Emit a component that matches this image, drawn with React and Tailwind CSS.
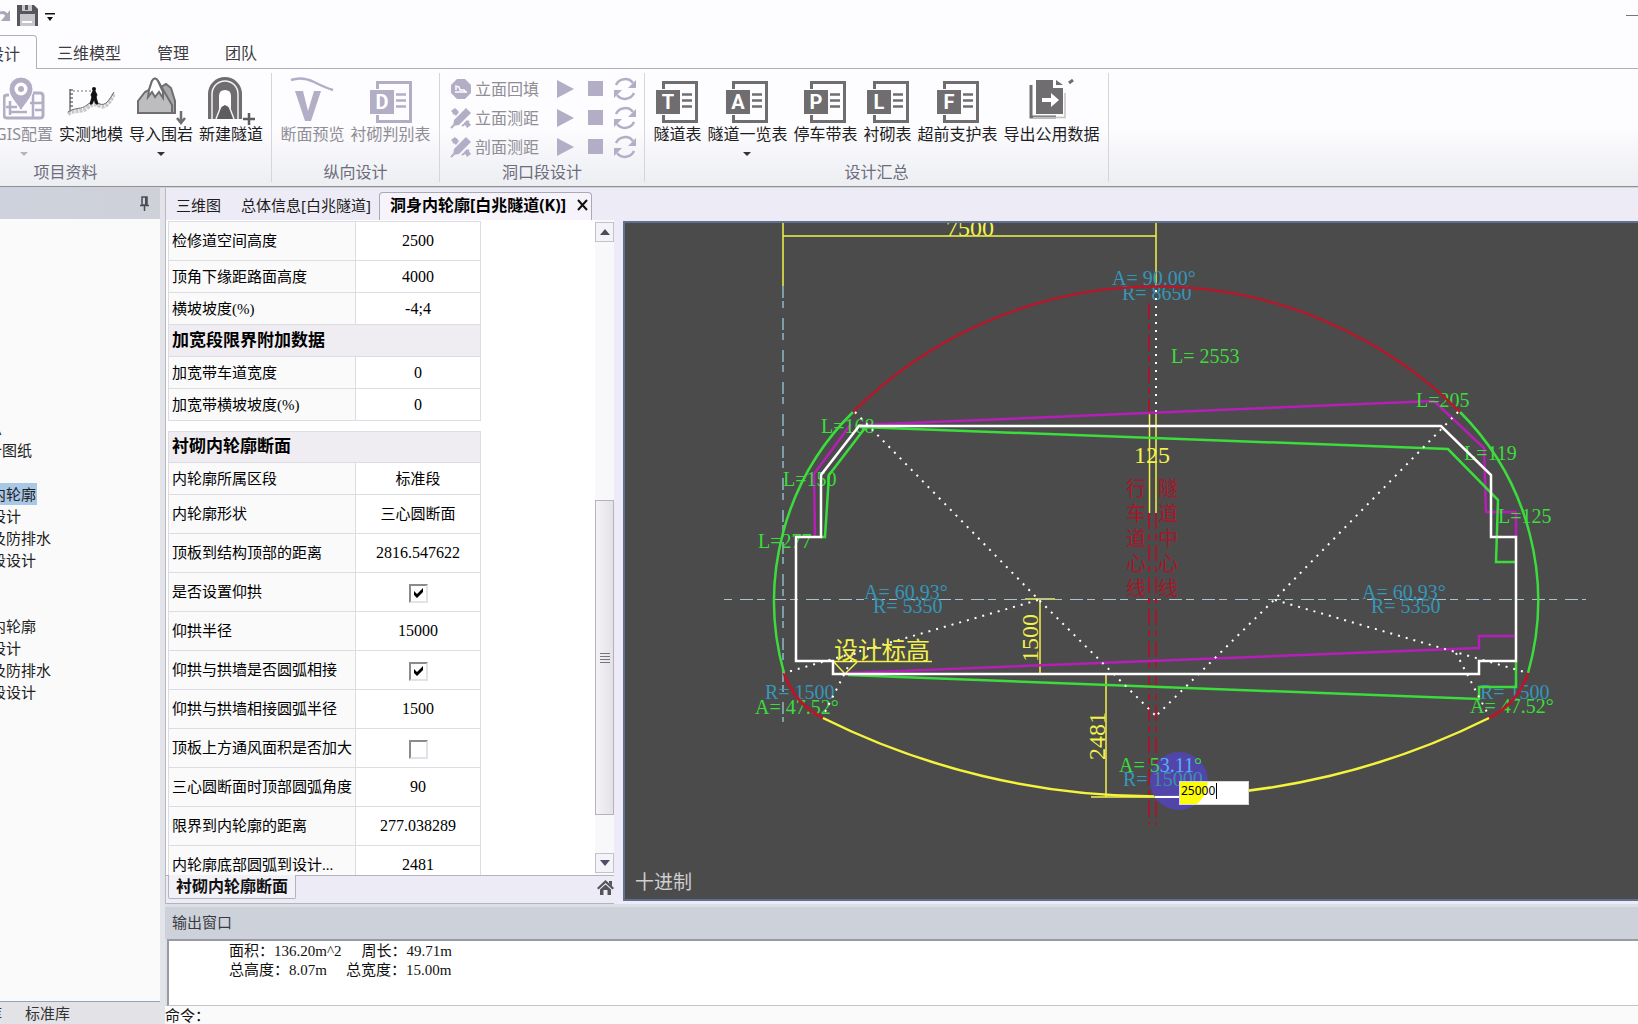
import React from "react";

const GRAY = "#6f6d70";
const DIM = "#b3aec5";

function SheetIcon({ letter, color = GRAY }) {
  return (
    <svg width="42" height="42" viewBox="0 0 42 42" aria-hidden="true">
      <path d="M7.5 8V1.5H40.5V40.5H7.5V34" fill="none" stroke={color} strokeWidth="3" />
      <rect x="0" y="9" width="24" height="24" fill={color} />
      <path d="M26 13.5H36M26 19.5H36M26 25.5H36" stroke={color} strokeWidth="2.5" />
      <text x="12" y="28" textAnchor="middle" fontSize="20" fill="#fff" className="font-['Roboto'] font-bold">
        {letter}
      </text>
    </svg>
  );
}

function GisIcon() {
  return (
    <svg width="42" height="44" viewBox="0 0 42 44" fill="none" stroke={DIM} aria-hidden="true">
      <path d="M6 18H4q-3 0-3 3V38q0 3 3 3H37q3 0 3-3V19q0-3-3-3H30" strokeWidth="3" />
      <path d="M3 30H14M27 26H39M30 17V40M6 35H24M32 33H39M7 24V38" strokeWidth="2.5" />
      <path d="M18 34C14 26 6 20 6 12a12 12 0 0 1 24 0C30 20 22 26 18 34Z" fill={DIM} stroke="#fff" strokeWidth="1" />
      <circle cx="18" cy="12" r="6.5" fill="#fff" stroke="none" />
      <circle cx="18" cy="12" r="3" fill={DIM} stroke="none" />
    </svg>
  );
}

function TerrainIcon() {
  return (
    <svg width="48" height="44" viewBox="0 0 48 44" fill="none" aria-hidden="true">
      <path d="M3 12V35M3 13H6M3 17H6M3 21H6M3 25H6M3 29H6" stroke="#333" strokeWidth="1" />
      <path d="M6 14H24" stroke="#777" strokeWidth="1" strokeDasharray="2 2" />
      <path d="M1 37C8 32 14 36 20 31S28 27 33 29S42 27 47 17" stroke="#c8c8c8" strokeWidth="4" strokeDasharray="3 1" />
      <path d="M1 35C8 30 14 33 20 28S28 25 33 27S42 24 47 15" stroke="#6b6b6b" strokeWidth="1" />
      <circle cx="27" cy="12" r="2" fill="#111" />
      <path d="M27 12L24 18L25 20L23 27H25L27 22L29 27H31L29 20L30 18Z" fill="#111" stroke="#111" />
    </svg>
  );
}

function RockIcon() {
  return (
    <svg width="50" height="48" viewBox="0 0 50 48" fill="none" stroke={GRAY} aria-hidden="true">
      <path d="M25 10L30 7L35 11L39 24V36H25Z" fill="#a9a8ab" strokeWidth="2" />
      <path d="M2 36V24L9 15L13 13L16 4Q19-1 22 4L29 16L36 28V36Z" fill="#bdbdbf" strokeWidth="2" />
      <path d="M13 13L16 4Q19-1 22 4L27 15V21L23 15L19 20L16 15L12 20Z" fill="#fff" strokeWidth="2" />
      <path d="M45 34V44M41 41L45 46L49 41" strokeWidth="2.5" />
    </svg>
  );
}

function TunnelIcon() {
  return (
    <svg width="48" height="48" viewBox="0 0 48 48" fill="none" aria-hidden="true">
      <path d="M1 42V17a17 17 0 0 1 34 0V42Z" fill={GRAY} />
      <path d="M5 42V17a13 13 0 0 1 26 0V42" stroke="#f4f4f6" strokeWidth="1.5" />
      <path d="M12 40V19q0-6 6-6t6 6V40Z" fill="#fff" />
      <path d="M9 42q2-12 9-14q7 2 9 14Z" fill="#5d5c60" />
      <path d="M9 42L14 29M27 42L22 29" stroke="#f4f4f6" strokeWidth="1.5" />
      <path d="M36 42H48M42 36V48" stroke="#5d5c60" strokeWidth="2.5" />
    </svg>
  );
}

function ProfileIcon() {
  return (
    <svg width="44" height="46" viewBox="0 0 44 46" fill="none" stroke={DIM} aria-hidden="true">
      <path d="M1 3Q12-1 24 5T43 13" strokeWidth="2.5" />
      <path d="M5 14H13L18 34L24 14H31L21 44H15Z" fill={DIM} stroke="none" />
    </svg>
  );
}

function ExportIcon() {
  return (
    <svg width="46" height="42" viewBox="0 0 46 42" fill="none" aria-hidden="true">
      <path d="M2 6V38H27" stroke={GRAY} strokeWidth="3" />
      <path d="M4 38.5H36V14" stroke="#c2c2c4" strokeWidth="1.5" />
      <path d="M7 1H24V9H34V35H7Z" fill={GRAY} />
      <path d="M27 1V6H34Z" fill={GRAY} />
      <path d="M13 19H22V14L30 21L22 28V23H13Z" fill="#fff" />
      <path d="M40 4L44 1" stroke={GRAY} strokeWidth="3" />
    </svg>
  );
}

function RibbonButton({ icon, label, dim, menu }) {
  return (
    <button
      type="button"
      className={`flex shrink-0 flex-col items-center whitespace-nowrap text-base leading-5 ${dim ? "text-[#8f8d96]" : "text-[#1e1e1e]"}`}
    >
      <span className="flex h-[47px] items-start justify-center">{icon}</span>
      <span>{label}</span>
      {menu && <span className={`mt-2 border-x-4 border-t-4 border-x-transparent ${dim ? "border-t-[#b5b5bb]" : "border-t-[#333]"}`} />}
    </button>
  );
}

function RibbonGroup({ title, className, children }) {
  return (
    <section className={`my-1 flex shrink-0 flex-col border-r border-[#d5d6dc] ${className}`}>
      <div className="flex-1">{children}</div>
      <h2 className="text-center text-base leading-5 text-[#6d6c7b]">{title}</h2>
    </section>
  );
}

function ToolIcon({ kind }) {
  return kind === "fill" ? (
    <svg width="22" height="22" viewBox="0 0 22 22" aria-hidden="true">
      <path d="M7 1H15L21 7V15L15 21H7L1 15V7Z" fill={DIM} />
      <path d="M6 12V8l3 1 1 3h4l2 2M5 14H17" stroke="#fff" strokeWidth="1.5" fill="none" />
    </svg>
  ) : (
    <svg width="22" height="22" viewBox="0 0 22 22" fill="none" stroke={DIM} aria-hidden="true">
      <path d="M1 4L5 1L9 5L6 9ZM14 16L17 13L21 18L17 21Z" fill={DIM} stroke="none" />
      <path d="M16 1L21 6L9 18L3 19L4 13Z" fill={DIM} stroke="none" />
      <path d="M3 7L7 3M12 19L19 14M1 21L4 18" strokeWidth="2" />
    </svg>
  );
}

function ToolRow({ kind, label }) {
  return (
    <div className="flex h-[29px] items-center">
      <button type="button" className="flex items-center gap-[3px] text-base leading-5 text-[#8f8d96]">
        <ToolIcon kind={kind} />
        {label}
      </button>
      <button type="button" aria-label={`运行${label}`} className="ml-4">
        <svg width="20" height="20" viewBox="0 0 20 20"><path d="M2 1L19 10L2 19Z" fill={DIM} /></svg>
      </button>
      <button type="button" aria-label={`停止${label}`} className="ml-[13px] size-[15px] bg-[#b3aec5]" />
      <button type="button" aria-label={`刷新${label}`} className="ml-2.5">
        <svg width="24" height="24" viewBox="0 0 24 24" fill="none" stroke={DIM} strokeWidth="2.5">
          <path d="M3 8A10 10 0 0 1 20 6M21 16A10 10 0 0 1 4 18" />
          <path d="M23 3V11H15ZM1 21V13H9Z" fill={DIM} stroke="none" />
        </svg>
      </button>
    </div>
  );
}

function Ribbon() {
  return (
    <div className="flex h-[118px] shrink-0 overflow-hidden border-b border-[#8f8f96] bg-linear-to-b from-[#fdfcff] from-50% to-[#eceef2]">
      <RibbonGroup title="项目资料" className="-ml-[140px] w-[412px]">
        <div className="flex justify-end gap-1.5 pt-1 pr-2">
          <RibbonButton icon={<GisIcon />} label="GIS配置" dim menu />
          <RibbonButton icon={<TerrainIcon />} label="实测地模" />
          <RibbonButton icon={<RockIcon />} label="导入围岩" menu />
          <RibbonButton icon={<TunnelIcon />} label="新建隧道" />
        </div>
      </RibbonGroup>
      <RibbonGroup title="纵向设计" className="w-[168px]">
        <div className="flex justify-center gap-1.5 pt-1">
          <RibbonButton icon={<ProfileIcon />} label="断面预览" dim />
          <RibbonButton icon={<span className="pt-1"><SheetIcon letter="D" color={DIM} /></span>} label="衬砌判别表" dim />
        </div>
      </RibbonGroup>
      <RibbonGroup title="洞口段设计" className="w-[205px]">
        <div className="flex flex-col pt-px pl-2.5">
          <ToolRow kind="fill" label="立面回填" />
          <ToolRow kind="measure" label="立面测距" />
          <ToolRow kind="measure" label="剖面测距" />
        </div>
      </RibbonGroup>
      <RibbonGroup title="设计汇总" className="w-[464px]">
        <div className="flex justify-center gap-1.5 pt-1">
          {[["T", "隧道表"], ["A", "隧道一览表"], ["P", "停车带表"], ["L", "衬砌表"], ["F", "超前支护表"]].map(([l, t]) => (
            <RibbonButton key={t} icon={<span className="pt-1"><SheetIcon letter={l} /></span>} label={t} menu={l === "A"} />
          ))}
          <RibbonButton icon={<span className="pt-0.5"><ExportIcon /></span>} label="导出公用数据" />
        </div>
      </RibbonGroup>
    </div>
  );
}

const TREE = ["", "内轮廓", "设计", "及防排水", "段设计", "", "", "内轮廓", "设计", "及防排水", "段设计"];

function SidePanel() {
  return (
    <aside className="flex w-[160px] shrink-0 flex-col overflow-hidden bg-[#fafafb]">
      <div className="flex h-[31px] shrink-0 items-center justify-end bg-linear-to-r from-[#cdd2dc] to-[#cfd1d9] pr-2.5">
        <button type="button" aria-label="固定">
          <svg width="11" height="16" viewBox="0 0 11 16" fill="none" stroke="#4a4c55">
            <path d="M3 1H8V9H3ZM1 9.5H10M5.5 10V15" strokeWidth="1.5" />
            <path d="M7 1V9" strokeWidth="2" />
          </svg>
        </button>
      </div>
      <ul className="flex-1 pt-[198px] text-[15px] leading-[22px] text-[#222]">
        <li className="-ml-[13px] h-[22px] whitespace-nowrap">息</li>
        <li className="-ml-[13px] h-[22px] whitespace-nowrap">计图纸</li>
        {TREE.map((t, i) => (
          <li key={i} className="-ml-[9px] h-[22px] whitespace-nowrap">
            {t && <button type="button" className={i === 1 ? "bg-[#a9c8e8] pr-px" : ""}>{t}</button>}
          </li>
        ))}
      </ul>
      <div className="flex h-[23px] shrink-0 items-center border-t border-[#8fa3c0] bg-[#e3e3e7] text-[15px] leading-5 text-[#333]">
        <button type="button" className="-ml-[13px]">库</button>
        <button type="button" className="ml-[23px]">标准库</button>
      </div>
    </aside>
  );
}

function Row({ label, value, tall }) {
  return (
    <tr className={tall ? "h-[39px]" : "h-8"}>
      <th scope="row" className="truncate border border-[#dddce2] bg-[#fafafb] p-0 pl-[3px] text-left font-normal">{label}</th>
      <td className={`border border-[#dddce2] p-0 text-center ${/\d/.test(String(value)) ? "text-base leading-5" : ""}`}>
        {typeof value === "boolean" ? (
          <label className="relative inline-block size-[19px] align-middle">
            <input type="checkbox" aria-label={label} defaultChecked={value} className="peer block size-[19px] appearance-none border-2 border-t-[#8b8b8f] border-r-[#e3e2e6] border-b-[#e3e2e6] border-l-[#8b8b8f] bg-white" />
            <svg className="pointer-events-none absolute top-1 left-1 hidden peer-checked:block" width="11" height="11" viewBox="0 0 11 11">
              <path d="M1 3L4 6L10 0V4L4 10L1 7Z" fill="#000" />
            </svg>
          </label>
        ) : value}
      </td>
    </tr>
  );
}

function Sheet({ title, before = [], rows, headH }) {
  return (
    <table className="w-[312px] table-fixed border-collapse font-['Liberation_Serif','Noto_Sans_CJK_SC',serif] text-[15px] leading-5 text-black">
      <colgroup><col className="w-[187px]" /><col className="w-[125px]" /></colgroup>
      <tbody>
        {before.map((r) => <Row key={r[0]} label={r[0]} value={r[1]} tall={r[2]} />)}
        <tr className={headH}>
          <th colSpan="2" className="border border-[#dddce2] bg-[#efedf1] p-0 pl-[3px] text-left text-[17px] font-bold">{title}</th>
        </tr>
        {rows.map((r) => <Row key={r[0]} label={r[0]} value={r[1]} tall={r[2]} />)}
      </tbody>
    </table>
  );
}

function ScrollBar() {
  return (
    <div className="flex w-[19px] shrink-0 flex-col bg-[#f8f8fa] py-0.5">
      <button type="button" aria-label="向上滚动" className="flex h-5 items-center justify-center border border-[#c3c2cc] bg-[#f4f3f7]">
        <span className="border-x-5 border-b-6 border-x-transparent border-b-[#4c4d56]" />
      </button>
      <div className="grow-[259] basis-0" />
      <div className="flex grow-[315] basis-0 flex-col items-center justify-center gap-px border border-[#b4b3bb] bg-linear-to-r from-[#f4f2f6] to-[#e4e2e8]">
        {[0, 1, 2, 3].map((i) => <span key={i} className="h-0.5 w-2.5 border-b border-[#77767e]" />)}
      </div>
      <div className="grow-[38] basis-0" />
      <button type="button" aria-label="向下滚动" className="flex h-5 items-center justify-center border border-[#c3c2cc] bg-[#f4f3f7]">
        <span className="border-x-5 border-t-6 border-x-transparent border-t-[#4c4d66]" />
      </button>
    </div>
  );
}

function PropertyPanel() {
  return (
    <div className="flex w-[449px] shrink-0 flex-col border-l border-[#b9b9c6] bg-[#edebf5]">
      <div className="flex min-h-0 flex-1 bg-white">
        <div className="flex min-w-0 flex-1 flex-col gap-2.5 overflow-hidden pt-px pl-0.5">
          <Sheet
            title="加宽段限界附加数据"
            headH="h-8"
            before={[["检修道空间高度", "2500", true], ["顶角下缘距路面高度", "4000"], ["横坡坡度(%)", "-4;4"]]}
            rows={[["加宽带车道宽度", "0"], ["加宽带横坡坡度(%)", "0"]]}
          />
          <Sheet
            title="衬砌内轮廓断面"
            headH="h-[31px]"
            rows={[
              ["内轮廓所属区段", "标准段"],
              ["内轮廓形状", "三心圆断面", true],
              ["顶板到结构顶部的距离", "2816.547622", true],
              ["是否设置仰拱", true, true],
              ["仰拱半径", "15000", true],
              ["仰拱与拱墙是否圆弧相接", true, true],
              ["仰拱与拱墙相接圆弧半径", "1500", true],
              ["顶板上方通风面积是否加大", false, true],
              ["三心圆断面时顶部圆弧角度", "90", true],
              ["限界到内轮廓的距离", "277.038289", true],
              ["内轮廓底部圆弧到设计...", "2481", true],
            ]}
          />
        </div>
        <ScrollBar />
      </div>
      <div className="flex h-[29px] shrink-0 items-start justify-between border-t border-b border-[#b3b3c0]">
        <button type="button" className="-mt-px ml-0.5 h-6 rounded-b-xs border border-t-0 border-[#b3b3c0] bg-[#f3f1f8] px-[7px] pb-0.5 text-base leading-5 font-bold text-[#111]">
          衬砌内轮廓断面
        </button>
        <button type="button" aria-label="主页" className="mt-1">
          <svg width="17" height="16" viewBox="0 0 17 16" fill="#55545a">
            <path d="M8.5 0L17 8L15.5 9.5L8.5 3L1.5 9.5L0 8ZM12 1H15V6L12 3Z" />
            <path d="M3 9.5L8.5 4.5L14 9.5V15H10.5V10H6.5V15H3Z" />
          </svg>
        </button>
      </div>
    </div>
  );
}

const Y = "#f2f24a";
const G = "#3bdc3b";
const C = "#3596b8";
const M = "#b51fb8";
const R = "#a3182a";

const LABELS = [
  [1112, 285, "A= 90.00°", C], [1122, 300, "R= 8650", C], [1171, 363, "L= 2553", G],
  [1416, 407, "L=205", G], [1464, 460, "L=119", G], [1498, 523, "L=125", G],
  [821, 433, "L=168", G], [783, 486, "L=150", G], [758, 548, "L=277", G],
  [864, 599, "A= 60.93°", C], [873, 613, "R= 5350", C],
  [1362, 599, "A= 60.93°", C], [1371, 613, "R= 5350", C],
  [765, 699, "R= 1500", C], [755, 714, "A= 47.52°", G],
  [1480, 699, "R= 1500", C], [1470, 713, "A= 47.52°", G],
];

function Drawing() {
  return (
    <svg width="1015" height="680" viewBox="623 221 1015 680" fill="none" className="block font-['Liberation_Serif','Noto_Sans_CJK_SC',serif]" role="img" aria-label="洞身内轮廓断面图">
      <g stroke={Y} strokeWidth="1.5">
        <path d="M783 221V286M1156 221V286M783 236H1156" />
        <path d="M1149.5 413V513M1156 413V513" />
        <path d="M1025 599H1055M1040 599V674M1106 674V797M1091 797H1166" />
        <path d="M833 661.5H932M834 662L845 674L857 662" />
      </g>
      <path d="M783 286V722" stroke="#8fb9c8" strokeWidth="1.5" strokeDasharray="12 3 7 10" />
      <path d="M724 599.5H1586" stroke="#a9c3cf" strokeWidth="1" strokeDasharray="8 8 13 4" />
      <g stroke={R} strokeWidth="2" strokeDasharray="16 5 6 5">
        <path d="M1149 303V412M1149 513V825M1156 513V825" />
      </g>
      <g fill={R} fontSize="20" textAnchor="middle">
        {["行", "车", "道", "心", "线"].map((t, i) => <text key={i} x="1136" y={496 + i * 25}>{t}</text>)}
        {["隧", "道", "中", "心", "线"].map((t, i) => <text key={i} x="1168" y={496 + i * 25}>{t}</text>)}
      </g>
      <g stroke={M} strokeWidth="2.5">
        <path d="M815 537L814 474L851 424M860 425L1434 401L1484 448L1486 512H1516V537" />
        <path d="M848 673L1479 648V636H1516" />
      </g>
      <g fontSize="20">
        {LABELS.map(([x, y, t, c]) => <text key={`${x}-${y}`} x={x} y={y} fill={c}>{t}</text>)}
      </g>
      <g stroke={G} strokeWidth="2.5">
        <path d="M865 428L829 475L825 537H821M860 427L1448 449L1498 500L1496 562H1516" />
        <path d="M848 675L1479 699V687H1516V661" />
        <path d="M853 412A266 266 0 0 0 784 673M1460 412A266 266 0 0 1 1528 673" />
      </g>
      <path d="M853 412A430 430 0 0 1 1460 412" stroke="#b5182a" strokeWidth="2.5" />
      <path d="M784 673A75 75 0 0 0 823 718M1528 673A75 75 0 0 1 1489 718" stroke="#b5182a" strokeWidth="3" />
      <path d="M823 718A746 746 0 0 0 1489 718" stroke="#f4f43c" strokeWidth="2.5" />
      <path d="M859 426H1441L1491 475V537H1516V661H1479V674H833V661H796V537H821V475Z" stroke="#fff" strokeWidth="2.5" />
      <g stroke="#fff" strokeWidth="2" strokeDasharray="2 6">
        <path d="M1156 290V412" />
        <path d="M855 412L1038 599L1156 716M1458 412L1275 599L1156 716" />
        <path d="M1038 600L784 673M1275 600L1528 673M855 653L823 716M1456 653L1489 716" />
      </g>
      <circle cx="1179" cy="781" r="29" fill="#5345b5" opacity="0.9" />
      <path d="M1155 797H1179" stroke="#fff" strokeWidth="2" />
      <g fontSize="20">
        <text x="1119" y="772" fill={G}>A= 5<tspan fill="#58b0f8">3.11</tspan>°</text>
        <text x="1123" y="786" fill={C}>R= <tspan fill="#3f8fa8">15000</tspan></text>
      </g>
      <g fill={Y} fontSize="24">
        <text x="946" y="236">7500</text>
        <text x="1134" y="463">125</text>
        <text x="834" y="659">设计标高</text>
        <text transform="translate(1038 662) rotate(-90)">1500</text>
        <text transform="translate(1105 760) rotate(-90)">2481</text>
      </g>
      <text x="635" y="889" fontSize="19" fill="#cfcfd1">十进制</text>
    </svg>
  );
}

function Canvas() {
  return (
    <div className="relative ml-[9px] min-w-0 flex-1 overflow-hidden border-2 border-r-0 border-[#62708f] bg-[#4b4b4c]">
      <div className="-mt-0.5 -ml-0.5"><Drawing /></div>
      <input
        aria-label="仰拱半径"
        defaultValue="25000"
        className="absolute top-[558px] left-[554px] h-6 w-[70px] border border-[#d8d8d8] bg-[radial-gradient(circle_at_0_0,#fbfb0a_27px,#ffffff_28px)] pb-1.5 pl-px font-['Noto_Sans'] text-xs leading-4 text-black"
      />
      <span className="absolute top-[560px] left-[591px] h-4 w-px bg-black" />
    </div>
  );
}

function DocumentTabs() {
  return (
    <div className="flex h-8 shrink-0 items-end border-l border-[#b9b9c6] bg-[#edebf5] pl-2.5 text-[15px] text-[#1c1c1c]" role="tablist">
      <button type="button" role="tab" className="flex h-7 pt-px leading-6">三维图</button>
      <button type="button" role="tab" className="ml-5 flex h-7 pt-px leading-6">总体信息[白兆隧道]</button>
      <div className="ml-2 flex h-7 items-start gap-[11px] rounded-t-sm border border-b-0 border-[#a9a9b8] bg-[#f6f4fa] pr-[3px] pl-2.5">
        <button type="button" role="tab" aria-selected="true" className="text-base leading-6 font-bold text-black">洞身内轮廓[白兆隧道(K)]</button>
        <button type="button" aria-label="关闭" className="mt-1.5">
          <svg width="11" height="12" viewBox="0 0 11 12"><path d="M1 1L10 11M10 1L1 11" stroke="#111" strokeWidth="2" /></svg>
        </button>
      </div>
    </div>
  );
}

function OutputPanel() {
  return (
    <section className="flex h-[120px] shrink-0 flex-col bg-[#dcdfe6] pt-[3px]">
      <h2 className="flex h-8 shrink-0 items-center bg-[#cdd1d9] pb-0.5 pl-[7px] text-[15px] text-[#3a3b42]">输出窗口</h2>
      <div className="ml-0.5 flex-1 border-t-2 border-b border-l-2 border-[#9a9aa4] border-b-[#c4c4ca] bg-white pt-px pl-15 font-['Liberation_Serif','Noto_Sans_CJK_SC',serif] text-[15px] leading-[19px] text-[#111]">
        <p className="flex gap-5"><span>面积：136.20m^2</span><span>周长：49.71m</span></p>
        <p className="flex gap-[19px]"><span>总高度：8.07m</span><span>总宽度：15.00m</span></p>
      </div>
      <label className="flex h-[18px] shrink-0 items-center bg-[#fafafb] text-[15px] leading-[18px] text-[#111]">
        命令：
        <input className="min-w-0 flex-1 bg-transparent outline-none" />
      </label>
    </section>
  );
}

export default function App() {
  return (
    <div className="flex h-screen flex-col overflow-hidden bg-[#fdfcff] font-['Noto_Sans','Noto_Sans_CJK_SC',sans-serif]">
      <header className="flex h-[35px] shrink-0 items-start justify-between pt-[5px]">
        <div className="flex items-start">
          <button type="button" aria-label="重做" className="mt-1">
            <svg width="11" height="14" viewBox="0 0 11 14" fill="none">
              <path d="M0 4Q5 2 7 7" stroke="#a9a6b8" strokeWidth="3" />
              <path d="M10 1V12H1Z" fill="#a9a6b8" />
            </svg>
          </button>
          <button type="button" aria-label="保存" className="ml-1.5">
            <svg width="21" height="21" viewBox="0 0 21 21">
              <path d="M0 0H17L21 4V21H0Z" fill="#57565c" />
              <rect x="5" y="0" width="10" height="6" fill="#c9c8cf" />
              <rect x="8" y="0" width="3" height="5" fill="#57565c" />
              <rect x="3" y="9" width="15" height="12" fill="#c6c5cb" />
              <path d="M5 17H15" stroke="#fff" strokeWidth="2" />
            </svg>
          </button>
          <button type="button" aria-label="自定义快速访问工具栏" className="mt-2 ml-1.5">
            <svg width="12" height="9" viewBox="0 0 12 9"><path d="M1 0H11V1.5H1ZM3 4H9L6 8Z" fill="#111" /></svg>
          </button>
        </div>
        <button type="button" aria-label="最小化" className="mt-2.5 h-px w-3 bg-[#777]" />
      </header>
      <nav className="flex h-[34px] shrink-0 text-base leading-[37px] text-[#3c3c42]">
        <button type="button" className="-ml-3 w-[49px] rounded-tr-sm border-t border-r border-[#b0b0bc] text-left">设计</button>
        <div className="flex flex-1 gap-9 border-b border-[#b0b0b8] pl-5">
          <button type="button">三维模型</button>
          <button type="button">管理</button>
          <button type="button">团队</button>
        </div>
      </nav>
      <Ribbon />
      <main className="flex min-h-0 flex-1 border-t border-[#d0d2d8] bg-[#e3e3ea]">
        <SidePanel />
        <div className="ml-[5px] flex min-w-0 flex-1 flex-col">
          <DocumentTabs />
          <div className="flex min-h-0 flex-1 bg-[#edebf8]">
            <PropertyPanel />
            <div className="flex min-w-0 flex-1 pt-px pb-[3px]"><Canvas /></div>
          </div>
          <OutputPanel />
        </div>
      </main>
    </div>
  );
}
